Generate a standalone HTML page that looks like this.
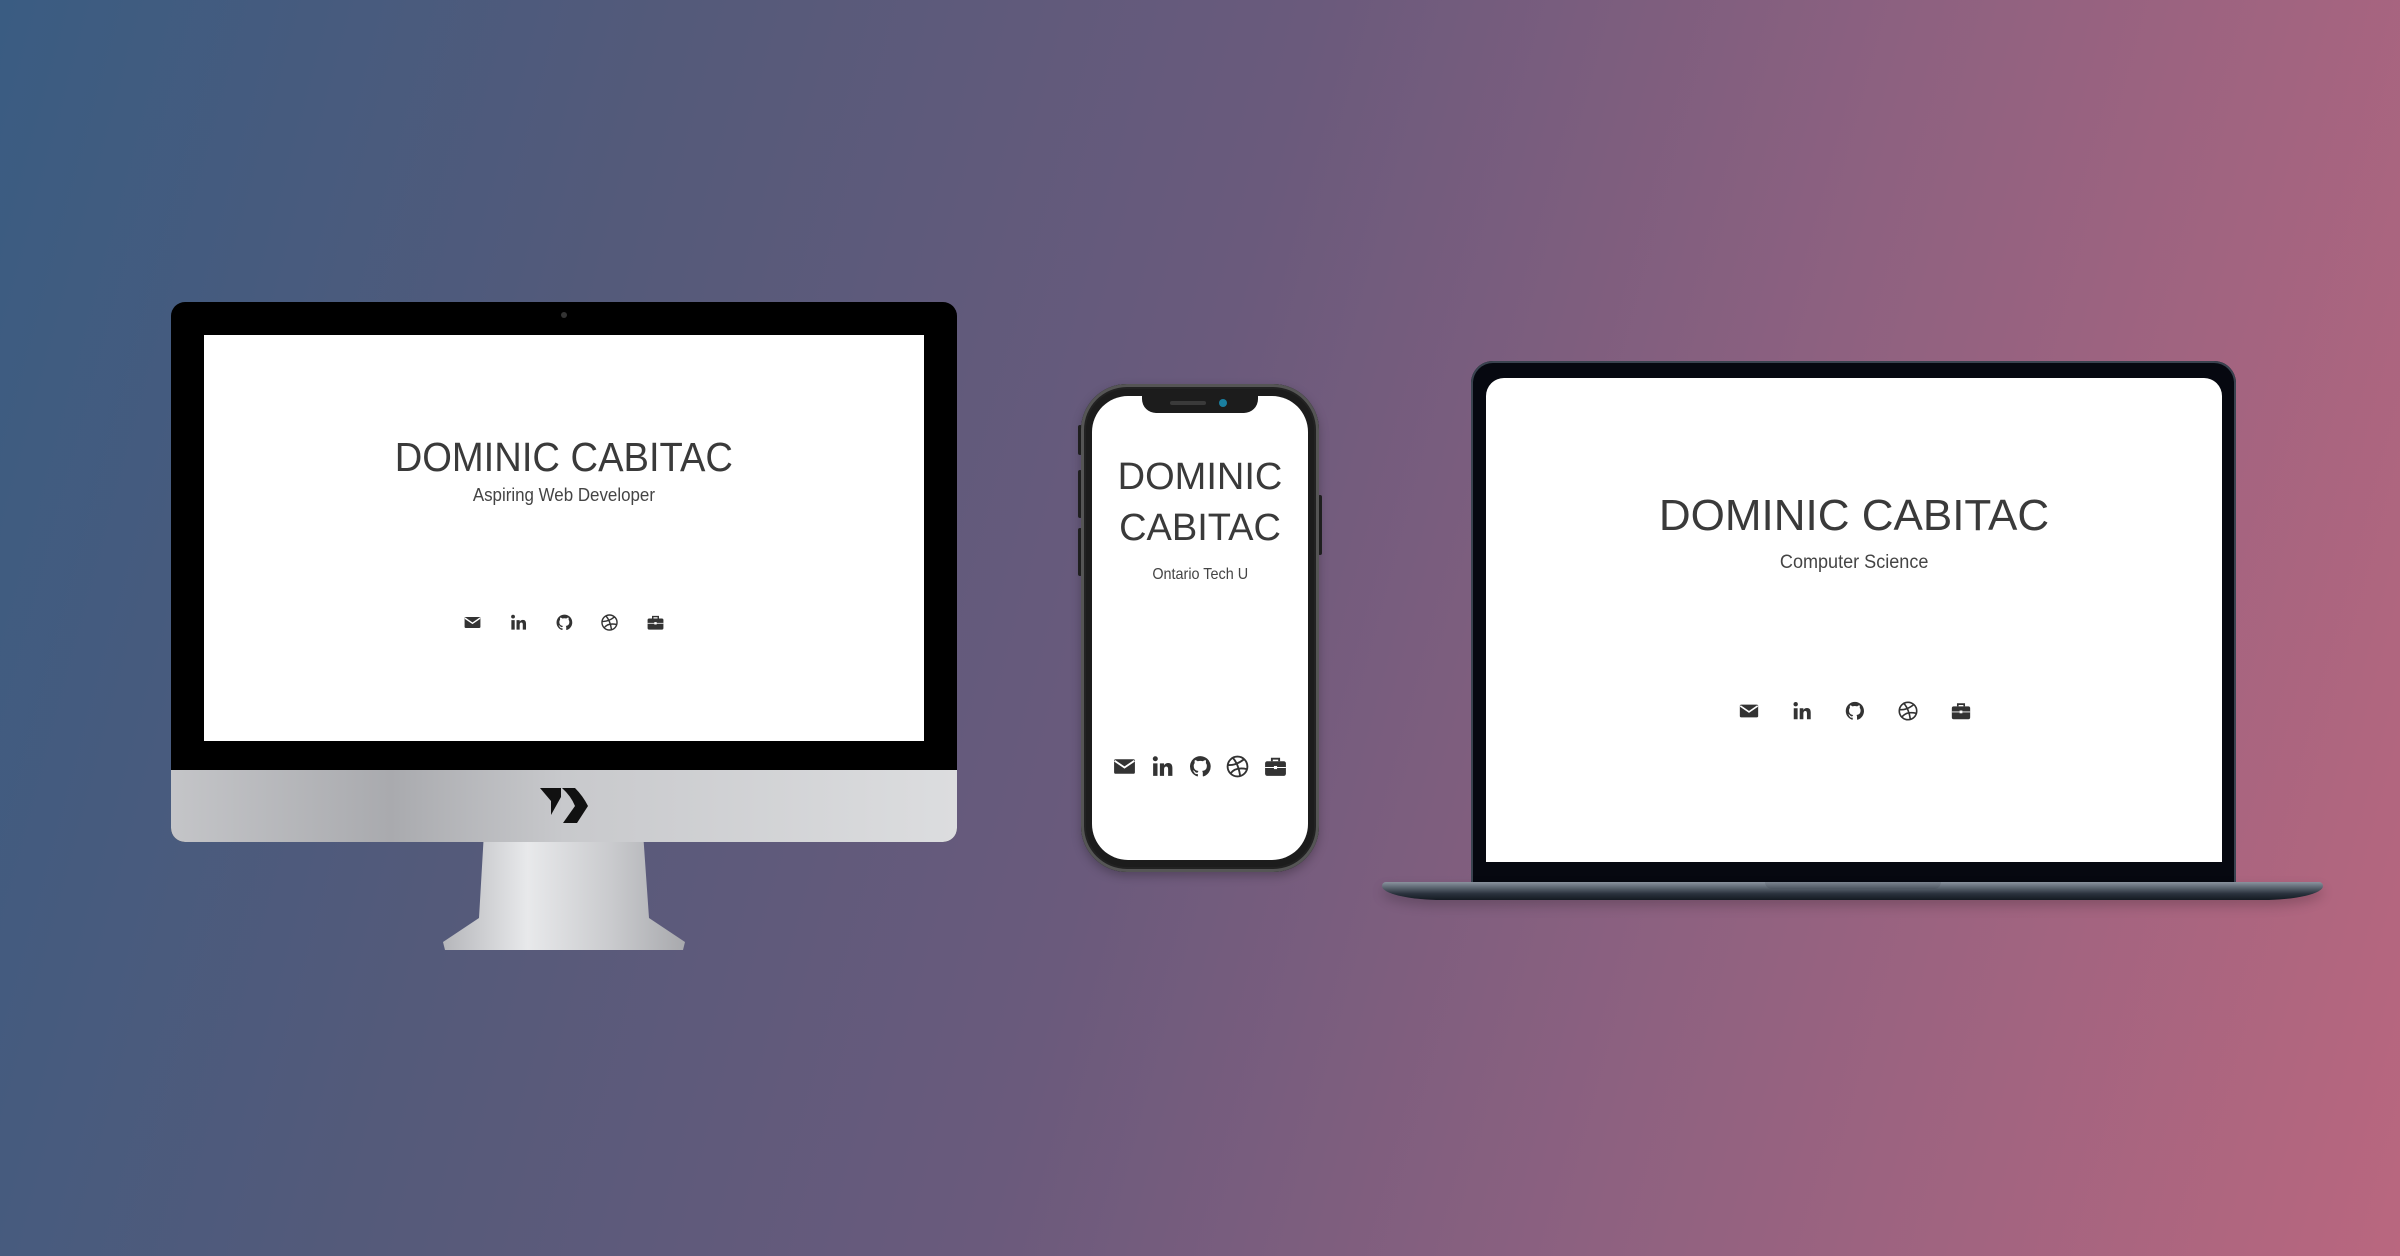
<!DOCTYPE html>
<html><head><meta charset="utf-8">
<style>
html,body{margin:0;padding:0}
body{width:2400px;height:1256px;position:relative;overflow:hidden;
background:linear-gradient(105deg,#3a5c82 0%,#545a7a 25%,#6a5a7c 48%,#8d6180 70%,#b9677f 100%);
font-family:"Liberation Sans",sans-serif;color:#3a3a3a}
.abs{position:absolute}
.t{position:absolute;left:0;right:0;text-align:center;white-space:nowrap;color:#3a3a3a}
.t span{display:inline-block}
.icons{position:absolute;display:flex;justify-content:space-between}
.icons svg{fill:#333}
</style></head><body>
<svg width="0" height="0" style="position:absolute">
<defs>
<symbol id="mail" viewBox="0 0 24 24"><rect x="2" y="5" width="20" height="14" rx="1.5"/><polyline points="2.5,6.5 12,13 21.5,6.5" fill="none" stroke="#fff" stroke-width="1.8"/></symbol>
<symbol id="li" viewBox="0 0 24 24"><rect x="3" y="9" width="4.2" height="12"/><circle cx="5.1" cy="4.6" r="2.4"/><path d="M9.5 9h4v1.9c.8-1.4 2.2-2.2 4-2.2 3 0 4 2 4 5V21h-4.1v-6.4c0-1.6-.5-2.6-1.8-2.6s-2.1 1-2.1 2.6V21h-4z"/></symbol>
<symbol id="gh" viewBox="0 0 24 24"><path d="M12 2a10 10 0 0 0-3.2 19.5c.5.1.7-.2.7-.5v-1.8c-2.8.6-3.4-1.3-3.4-1.3-.5-1.2-1.1-1.5-1.1-1.5-.9-.6.1-.6.1-.6 1 .1 1.5 1 1.5 1 .9 1.5 2.3 1.1 2.9.8.1-.6.3-1.1.6-1.3-2.2-.3-4.6-1.1-4.6-5 0-1.1.4-2 1-2.7-.1-.3-.4-1.3.1-2.7 0 0 .8-.3 2.7 1a9.4 9.4 0 0 1 5 0c1.9-1.3 2.7-1 2.7-1 .5 1.4.2 2.4.1 2.7.6.7 1 1.6 1 2.7 0 3.9-2.3 4.7-4.6 5 .4.3.7.9.7 1.9V21c0 .3.2.6.7.5A10 10 0 0 0 12 2z"/></symbol>
<symbol id="dr" viewBox="0 0 24 24"><g fill="none" stroke="#333" stroke-width="1.8"><circle cx="12" cy="12" r="9.5"/><path d="M7.5 3.6c3.5 4 6 10 7 17.2"/><path d="M2.6 10.5c5 .6 10-1 15.5-5.3"/><path d="M5.2 18.8c3-4.2 8-6 15.8-4.3"/></g></symbol>
<symbol id="bc" viewBox="0 0 24 24"><rect x="2" y="7" width="20" height="14" rx="2"/><path d="M8.5 7V4.5h7V7" fill="none" stroke="#333" stroke-width="1.8"/><line x1="2" y1="13" x2="22" y2="13" stroke="#fff" stroke-width="1"/><rect x="10.5" y="11.5" width="3" height="3" fill="#fff"/></symbol>
</defs></svg>

<!-- iMac -->
<div class="abs" style="left:443px;top:832px;width:242px;height:118px;background:linear-gradient(90deg,#b5b6ba,#e8e9eb 35%,#c9cacd 70%,#a8a9ad);clip-path:polygon(41px 0,200px 0,206px 86px,242px 110px,240px 118px,2px 118px,0 110px,36px 86px)"></div>
<div class="abs" style="left:171px;top:302px;width:786px;height:540px;background:#000;border-radius:14px;overflow:hidden">
  <div class="abs" style="left:0;top:468px;width:786px;height:72px;background:linear-gradient(90deg,#c4c5c8,#a9aaae 28%,#c8c9cc 50%,#dcdddf 100%)"></div>
  <div class="abs" style="left:390px;top:10px;width:6px;height:6px;border-radius:50%;background:#333"></div>
  <svg class="abs" style="left:349px;top:468px" width="90" height="70" viewBox="0 0 90 70"><path d="M20 18H41V27L31 45V31Z" fill="#111"/><path d="M42 18H55Q63 26 68 36L57 53H43L55 36Q51 26 42 18Z" fill="#111"/></svg>
</div>
<div class="abs" style="left:204px;top:335px;width:720px;height:406px;background:#fff">
  <div class="t" style="top:99px;font-size:41px"><span style="transform:scaleX(.93)">DOMINIC CABITAC</span></div>
  <div class="t" style="top:150px;font-size:18px;color:#444"><span style="transform:scaleX(.94)">Aspiring Web Developer</span></div>
  <div class="icons" style="left:259px;top:278px;width:202px;height:19px">
    <svg width="19" height="19"><use href="#mail"/></svg><svg width="19" height="19"><use href="#li"/></svg><svg width="19" height="19"><use href="#gh"/></svg><svg width="19" height="19"><use href="#dr"/></svg><svg width="19" height="19"><use href="#bc"/></svg>
  </div>
</div>

<!-- Phone -->
<div class="abs" style="left:1078px;top:425px;width:4px;height:30px;background:#222;border-radius:2px"></div>
<div class="abs" style="left:1078px;top:470px;width:4px;height:48px;background:#222;border-radius:2px"></div>
<div class="abs" style="left:1078px;top:528px;width:4px;height:48px;background:#222;border-radius:2px"></div>
<div class="abs" style="left:1318px;top:495px;width:4px;height:60px;background:#222;border-radius:2px"></div>
<div class="abs" style="left:1081px;top:384px;width:238px;height:488px;background:#1c1c1c;border-radius:46px;box-shadow:inset 0 0 0 3px #555,inset 0 0 0 5px #222,0 4px 10px rgba(0,0,0,.25)"></div>
<div class="abs" style="left:1092px;top:396px;width:216px;height:464px;background:#fff;border-radius:36px;overflow:hidden">
  <div class="abs" style="left:50px;top:0;width:116px;height:17px;background:#1c1c1c;border-radius:0 0 14px 14px"></div>
  <div class="abs" style="left:78px;top:5px;width:36px;height:4px;background:#3a3a3a;border-radius:2px"></div>
  <div class="abs" style="left:127px;top:3px;width:8px;height:8px;background:#1a7fa0;border-radius:50%"></div>
  <div class="t" style="top:56px;font-size:38px;line-height:51px">DOMINIC<br>CABITAC</div>
  <div class="t" style="top:170px;font-size:16px;color:#444"><span style="transform:scaleX(.9)">Ontario Tech U</span></div>
  <div class="icons" style="left:20px;top:358px;width:176px;height:25px">
    <svg width="25" height="25"><use href="#mail"/></svg><svg width="25" height="25"><use href="#li"/></svg><svg width="25" height="25"><use href="#gh"/></svg><svg width="25" height="25"><use href="#dr"/></svg><svg width="25" height="25"><use href="#bc"/></svg>
  </div>
</div>

<!-- Laptop -->
<div class="abs" style="left:1471px;top:361px;width:765px;height:525px;background:#060810;border-radius:22px 22px 0 0;box-shadow:inset 0 0 0 2px #3a4350"></div>
<div class="abs" style="left:1486px;top:378px;width:736px;height:484px;background:#fff;border-radius:18px 18px 0 0">
  <div class="t" style="top:113px;font-size:44px">DOMINIC CABITAC</div>
  <div class="t" style="top:174px;font-size:19px;color:#444"><span style="transform:scaleX(.95)">Computer Science</span></div>
  <div class="icons" style="left:252px;top:322px;width:234px;height:22px">
    <svg width="22" height="22"><use href="#mail"/></svg><svg width="22" height="22"><use href="#li"/></svg><svg width="22" height="22"><use href="#gh"/></svg><svg width="22" height="22"><use href="#dr"/></svg><svg width="22" height="22"><use href="#bc"/></svg>
  </div>
</div>
<div class="abs" style="left:1382px;top:882px;width:941px;height:18px;background:linear-gradient(180deg,#8a939e 0%,#5d6772 30%,#2a323d 65%,#141a22 100%);border-radius:4px 4px 60px 60px / 4px 4px 14px 14px;box-shadow:0 6px 12px rgba(0,0,0,.2)"></div>
<div class="abs" style="left:1765px;top:882px;width:176px;height:7px;background:linear-gradient(180deg,#7c8590,#4a535e);border-radius:0 0 8px 8px"></div>
</body></html>
